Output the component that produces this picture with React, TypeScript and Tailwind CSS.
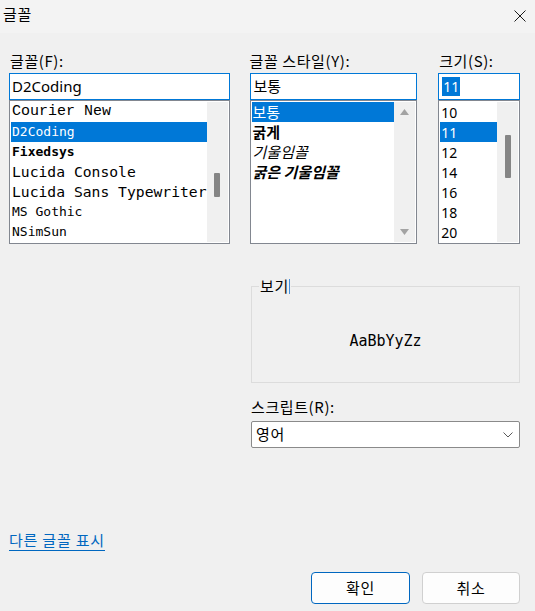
import React from "react";

function Track({ thumbTop, thumbH }: { thumbTop: number; thumbH: number }) {
  return (
    <div className="w-[21px] h-full bg-[#f0f0f0] flex flex-col items-center">
      <div className="w-[6px] bg-[#858585] rounded-[1px]" style={{ marginTop: thumbTop, height: thumbH }} />
    </div>
  );
}

const fonts = [
  { name: "Courier New", cls: "font-['Liberation_Mono',monospace] text-[15px]" },
  { name: "D2Coding", cls: "font-['DejaVu_Sans_Mono',monospace] text-[13px]", sel: true },
  { name: "Fixedsys", cls: "font-['DejaVu_Sans_Mono',monospace] text-[13px] font-bold" },
  { name: "Lucida Console", cls: "font-['DejaVu_Sans_Mono',monospace] text-[14.7px]" },
  { name: "Lucida Sans Typewriter", cls: "font-['DejaVu_Sans_Mono',monospace] text-[14.7px]" },
  { name: "MS Gothic", cls: "font-['DejaVu_Sans_Mono',monospace] text-[13px]" },
  { name: "NSimSun", cls: "font-['DejaVu_Sans_Mono',monospace] text-[13px]" },
];

const styles = [
  { name: "보통", cls: "", sel: true },
  { name: "굵게", cls: "font-bold" },
  { name: "기울임꼴", cls: "italic" },
  { name: "굵은 기울임꼴", cls: "font-bold italic" },
];

const sizes = ["10", "11", "12", "14", "16", "18", "20"];

export default function App() {
  return (
    <div className="w-[535px] h-[611px] bg-[#f0f0f0] flex flex-col text-black overflow-hidden font-['Noto_Sans_CJK_KR',sans-serif]">
      {/* Title bar */}
      <div className="h-[33px] bg-[#f3f3f3] flex items-center justify-between pl-[3px] pr-[9px]">
        <span className="text-[15px] leading-[20px] tracking-[0.8px] self-start mt-[4px]">글꼴</span>
        <svg width="12" height="12" viewBox="0 0 12 12" className="mt-[-1px]">
          <path d="M0.5 0.5 L11.5 11.5 M11.5 0.5 L0.5 11.5" stroke="#1a1a1a" strokeWidth="1" fill="none" />
        </svg>
      </div>

      <div className="flex-1 flex flex-col pl-[9px] pr-[15px] pt-[18px]">
        <div className="flex">
          {/* Font column */}
          <div className="w-[221px] flex flex-col">
            <div className="h-[22px] text-[15px] leading-[20px] tracking-[0.6px] pl-[1px]">글꼴(F):</div>
            <div className="h-[27px] bg-white border border-[#0078d7] flex items-center pl-[2px] font-['Noto_Sans',sans-serif] text-[15px]">
              D2Coding
            </div>
            <div className="h-[144px] bg-white border border-[#828790] p-px flex">
              <div className="flex-1 flex flex-col overflow-hidden">
                {fonts.map((f) => (
                  <div
                    key={f.name}
                    className={`h-[20px] flex items-center pl-[1px] whitespace-nowrap overflow-hidden ${f.cls} ${f.sel ? "bg-[#0078d7] text-white" : ""}`}
                  >
                    {f.name}
                  </div>
                ))}
              </div>
              <Track thumbTop={71} thumbH={24} />
            </div>
          </div>

          {/* Style column */}
          <div className="ml-[20px] w-[168px] flex flex-col">
            <div className="h-[22px] text-[15px] leading-[20px] tracking-[0.6px]">글꼴 스타일(Y):</div>
            <div className="h-[27px] bg-white border border-[#0078d7] flex items-center pl-[3px] text-[15px]">
              보통
            </div>
            <div className="h-[144px] bg-white border border-[#828790] p-px flex">
              <div className="flex-1 flex flex-col overflow-hidden">
                {styles.map((s) => (
                  <div
                    key={s.name}
                    className={`h-[20px] flex items-center pl-[1px] text-[15px] whitespace-nowrap ${s.cls} ${s.sel ? "bg-[#0078d7] text-white" : ""}`}
                  >
                    {s.name}
                  </div>
                ))}
              </div>
              <div className="w-[21px] h-full bg-[#f0f0f0] flex flex-col justify-between">
                <div className="h-[20px] flex items-center justify-center">
                  <svg width="9" height="6" viewBox="0 0 9 6">
                    <path d="M4.5 0 L9 6 L0 6 Z" fill="#a3a3a3" />
                  </svg>
                </div>
                <div className="h-[20px] flex items-center justify-center">
                  <svg width="9" height="6" viewBox="0 0 9 6">
                    <path d="M0 0 L9 0 L4.5 6 Z" fill="#a3a3a3" />
                  </svg>
                </div>
              </div>
            </div>
          </div>

          {/* Size column */}
          <div className="ml-[21px] w-[82px] flex flex-col">
            <div className="h-[22px] text-[15px] leading-[20px] tracking-[0.6px] pl-[1px]">크기(S):</div>
            <div className="h-[27px] bg-white border border-[#0078d7] flex items-center pl-[3px] font-['Noto_Sans',sans-serif] text-[14px]">
              <span className="bg-[#0078d7] text-white h-[19px] leading-[19px] px-[1px]">11</span>
            </div>
            <div className="h-[144px] bg-white border border-[#828790] p-px flex">
              <div className="flex-1 flex flex-col overflow-hidden">
                {sizes.map((s) => (
                  <div
                    key={s}
                    className={`h-[20px] flex items-center pl-[1px] font-['Noto_Sans',sans-serif] text-[14px] ${s === "11" ? "bg-[#0078d7] text-white" : ""}`}
                  >
                    {s}
                  </div>
                ))}
              </div>
              <Track thumbTop={33} thumbH={43} />
            </div>
          </div>
        </div>

        {/* Sample and script */}
        <div className="ml-[242px] w-[269px] flex flex-col mt-[42px]">
          <div className="relative h-[97px] border border-[#dcdcdc] flex items-center justify-center pt-[12px]">
            <span className="absolute left-[7px] top-[-11px] px-[1px] bg-[#f0f0f0] text-[15px] leading-[20px] tracking-[0.8px] flex items-center">
              보기
              <span className="w-px h-[15px] bg-[#4a90d9]" />
            </span>
            <span className="font-['DejaVu_Sans_Mono',monospace] text-[15px] leading-[20px]">AaBbYyZz</span>
          </div>
          <div className="mt-[14px] mb-[4px] text-[15px] leading-[20px] tracking-[0.6px]">스크립트(R):</div>
          <div className="h-[27px] bg-white border border-[#8a8a8a] rounded-[2px] flex items-center justify-between pl-[4px] pr-[6px] text-[15px] tracking-[0.6px]">
            <span>영어</span>
            <svg width="10" height="6" viewBox="0 0 10 6">
              <path d="M0.5 0.5 L5 5 L9.5 0.5" stroke="#5a5a5a" strokeWidth="1" fill="none" />
            </svg>
          </div>
        </div>

        {/* Link */}
        <div className="mt-[82px] self-start text-[15px] leading-[20px] tracking-[0.8px] text-[#0067c0] border-b border-[#0067c0]">
          다른 글꼴 표시
        </div>

        {/* Buttons */}
        <div className="mt-[21px] flex justify-end gap-[12px]">
          <button className="w-[99px] h-[32px] bg-[#fdfdfd] border border-[#0067c0] rounded-[4px] text-[15px] leading-[20px] tracking-[0.6px]">
            확인
          </button>
          <button className="w-[98px] h-[32px] bg-[#fdfdfd] border border-[#d0d0d0] rounded-[4px] text-[15px] leading-[20px] tracking-[0.6px]">
            취소
          </button>
        </div>
      </div>
    </div>
  );
}
